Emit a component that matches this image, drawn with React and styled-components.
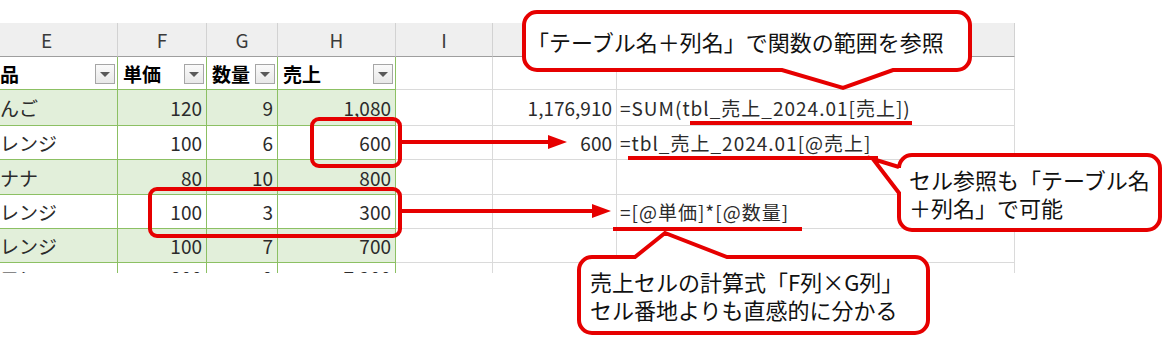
import React from 'react';
import styled, { createGlobalStyle, css } from 'styled-components';

const GlobalStyle = createGlobalStyle`
  html, body {
    margin: 0;
    padding: 0;
    background: #ffffff;
  }
  body {
    font-family: "Noto Sans CJK JP", "Noto Sans", sans-serif;
  }
`;

const RED = '#e60000';

const Page = styled.div`
  position: relative;
  width: 1169px;
  height: 353px;
  overflow: hidden;
  padding-top: 23px;
  box-sizing: border-box;
`;

const Sheet = styled.div`
  display: grid;
  grid-template-columns: 142px 89px 71px 118px 97px 124px 398px;
  grid-template-rows: 34px 33px 36px 34px 35px 34px 34px 30px;
  margin-left: -24px;
  width: 1039px;
  height: 250px;
  overflow: hidden;
  font-size: 19px;
  color: #2b2b2b;
`;

const ColHead = styled.div`
  display: flex;
  align-items: center;
  justify-content: center;
  background: #efefef;
  border-right: 1px solid #d2d2d2;
  border-bottom: 1px solid #9e9e9e;
  color: #3a3a3a;
  font-size: 19px;
  box-sizing: border-box;
`;

const Cell = styled.div`
  display: flex;
  align-items: center;
  box-sizing: border-box;
  white-space: nowrap;
  min-width: 0;
  padding: 0 4px 0 5px;
  border-right: 1px solid #dadada;
  border-bottom: 1px solid #dadada;
  justify-content: ${({ $align }) => ($align === 'right' ? 'flex-end' : 'flex-start')};
  ${({ $table }) =>
    $table &&
    css`
      border-right-color: #8cc063;
      border-bottom-color: #8cc063;
    `}
  ${({ $band }) => $band && css`background: #e2efda;`}
  ${({ $bold }) =>
    $bold &&
    css`
      font-weight: 700;
      color: #000;
      justify-content: space-between;
      padding-right: 2px;
    `}
  ${({ $formula }) =>
    $formula &&
    css`
      overflow: visible;
      padding-left: 3px;
      letter-spacing: 1px;
    `}
`;

const FilterButton = styled.span`
  display: flex;
  align-items: center;
  justify-content: center;
  width: 20px;
  height: 20px;
  margin-top: 2px;
  border: 1px solid #a6a6a6;
  background: linear-gradient(#fafafa, #e8e8e8);
  box-sizing: border-box;

  &::after {
    content: '';
    border-left: 5px solid transparent;
    border-right: 5px solid transparent;
    border-top: 5px solid #595959;
  }
`;

const Highlight = styled.div`
  position: absolute;
  left: ${({ $x }) => $x}px;
  top: ${({ $y }) => $y}px;
  width: ${({ $w }) => $w}px;
  height: ${({ $h }) => $h}px;
  border: 4px solid ${RED};
  border-radius: 9px;
  box-sizing: border-box;
`;

const Underline = styled.div`
  position: absolute;
  left: ${({ $x }) => $x}px;
  top: ${({ $y }) => $y}px;
  width: ${({ $w }) => $w}px;
  height: 4px;
  background: ${RED};
`;

const ArrowSvg = styled.svg`
  position: absolute;
  left: ${({ $x }) => $x}px;
  top: ${({ $y }) => $y - 8}px;
  overflow: visible;
`;

const CalloutBox = styled.div`
  position: absolute;
  left: ${({ $x }) => $x}px;
  top: ${({ $y }) => $y}px;
  width: ${({ $w }) => $w}px;
  height: ${({ $h }) => $h}px;
`;

const CalloutShape = styled.svg`
  position: absolute;
  left: 0;
  top: 0;
  overflow: visible;
`;

const CalloutText = styled.div`
  position: relative;
  display: flex;
  flex-direction: column;
  justify-content: center;
  height: 100%;
  padding-left: ${({ $pad }) => $pad}px;
  box-sizing: border-box;
  font-size: 22px;
  line-height: 28px;
  color: #111;
  white-space: nowrap;
`;

const columns = ['E', 'F', 'G', 'H', 'I', 'J', 'K'];
const headers = ['商品', '単価', '数量', '売上'];

const rows = [
  { e: 'りんご', f: '120', g: '9', h: '1,080', j: '1,176,910', k: '=SUM(tbl_売上_2024.01[売上])' },
  { e: 'オレンジ', f: '100', g: '6', h: '600', j: '600', k: '=tbl_売上_2024.01[@売上]' },
  { e: 'バナナ', f: '80', g: '10', h: '800' },
  { e: 'オレンジ', f: '100', g: '3', h: '300', k: '=[@単価]*[@数量]' },
  { e: 'オレンジ', f: '100', g: '7', h: '700' },
  { e: 'メロン', f: '800', g: '9', h: '7,200' },
];

const roundRect = (w, h, r, pointer) => {
  // centre line of a 4px stroke
  const l = 2, t = 2, rr = w - 2, b = h - 2;
  let top = `H ${rr - r}`;
  let bottom = `H ${l + r}`;
  let left = `V ${t + r}`;
  if (pointer.side === 'top') {
    top = `H ${pointer.a} L ${pointer.vx} ${pointer.vy} L ${pointer.b} ${t} H ${rr - r}`;
  }
  if (pointer.side === 'bottom') {
    bottom = `H ${pointer.b} L ${pointer.vx} ${pointer.vy} L ${pointer.a} ${b} H ${l + r}`;
  }
  if (pointer.side === 'left') {
    left = `V ${pointer.b} L ${pointer.vx} ${pointer.vy} L ${l} ${pointer.a} V ${t + r}`;
  }
  return [
    `M ${l + r} ${t}`,
    top,
    `A ${r} ${r} 0 0 1 ${rr} ${t + r}`,
    `V ${b - r}`,
    `A ${r} ${r} 0 0 1 ${rr - r} ${b}`,
    bottom,
    `A ${r} ${r} 0 0 1 ${l} ${b - r}`,
    left,
    `A ${r} ${r} 0 0 1 ${l + r} ${t}`,
    'Z',
  ].join(' ');
};

const Callout = ({ x, y, w, h, pointer, pad, children }) => (
  <CalloutBox $x={x} $y={y} $w={w} $h={h}>
    <CalloutShape width={w} height={h}>
      <path
        d={roundRect(w, h, 13, pointer)}
        fill="#fff"
        stroke={RED}
        strokeWidth="4"
        strokeLinejoin="miter"
      />
    </CalloutShape>
    <CalloutText $pad={pad}>{children}</CalloutText>
  </CalloutBox>
);

const Arrow = ({ x, y, length }) => (
  <ArrowSvg $x={x} $y={y} width={length} height="16">
    <rect x="0" y="6" width={length - 18} height="4" fill={RED} />
    <polygon points={`${length - 19},1 ${length},8 ${length - 19},15`} fill={RED} />
  </ArrowSvg>
);

const App = () => {
  return (
    <>
      <GlobalStyle />
      <Page>
        <Sheet>
          {columns.map((c) => (
            <ColHead key={c}>{c}</ColHead>
          ))}
          {headers.map((h) => (
            <Cell key={h} $table $bold>
              <span>{h}</span>
              <FilterButton />
            </Cell>
          ))}
          <Cell />
          <Cell />
          <Cell />
          {rows.map((r, i) => (
            <React.Fragment key={i}>
              <Cell $table $band={i % 2 === 0}>{r.e}</Cell>
              <Cell $table $band={i % 2 === 0} $align="right">{r.f}</Cell>
              <Cell $table $band={i % 2 === 0} $align="right">{r.g}</Cell>
              <Cell $table $band={i % 2 === 0} $align="right">{r.h}</Cell>
              <Cell />
              <Cell $align="right">{r.j}</Cell>
              <Cell $formula>{r.k}</Cell>
            </React.Fragment>
          ))}
        </Sheet>

        <Highlight $x={310} $y={117} $w={92} $h={51} />
        <Highlight $x={148} $y={187} $w={254} $h={51} />

        <Arrow x={401} y={142} length={166} />
        <Arrow x={401} y={211} length={210} />

        <Underline $x={690} $y={121} $w={222} />
        <Underline $x={628} $y={156} $w={250} />
        <Underline $x={613} $y={227} $w={189} />

        <Callout
          x={522}
          y={10}
          w={450}
          h={62}
          pad={5}
          pointer={{ side: 'bottom', a: 260, b: 371, vx: 321, vy: 78 }}
        >
          <div>「テーブル名＋列名」で関数の範囲を参照</div>
        </Callout>

        <Callout
          x={897}
          y={153}
          w={265}
          h={79}
          pad={12}
          pointer={{ side: 'left', a: 14, b: 40, vx: -24, vy: 6 }}
        >
          <div>セル参照も「テーブル名</div>
          <div>＋列名」で可能</div>
        </Callout>

        <Callout
          x={577}
          y={255}
          w={353}
          h={80}
          pad={13}
          pointer={{ side: 'top', a: 58, b: 150, vx: 88, vy: -22 }}
        >
          <div>売上セルの計算式「F列×G列」</div>
          <div>セル番地よりも直感的に分かる</div>
        </Callout>
      </Page>
    </>
  );
};

export default App;
